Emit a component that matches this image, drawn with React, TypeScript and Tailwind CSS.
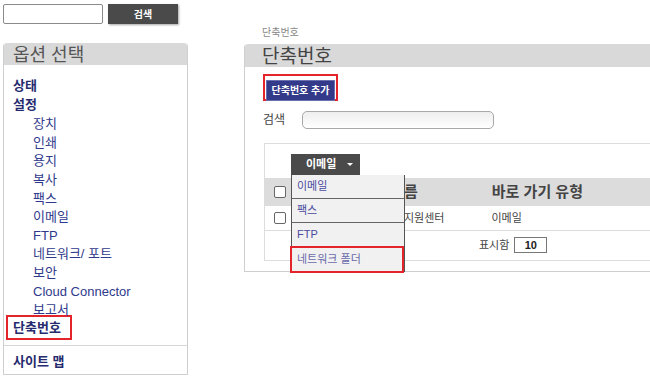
import React from 'react';

const subItems = ['장치', '인쇄', '용지', '복사', '팩스', '이메일', 'FTP', '네트워크/ 포트', '보안', 'Cloud Connector', '보고서'];
const menuItems = ['이메일', '팩스', 'FTP'];

export default function App() {
  return (
    <div className="w-[650px] h-[380px] overflow-hidden bg-white flex font-['Liberation_Sans','Noto_Sans_CJK_KR',sans-serif]">
      {/* Left column */}
      <div className="w-[244px] shrink-0 pl-[3px] pt-[4px]">
        <div className="flex gap-[5px] h-[20px]">
          <input className="w-[100px] h-[20px] border border-[#8a8a8a] rounded-[2px] bg-white" />
          <button className="w-[70px] h-[20px] bg-[#4a4a4a] text-white text-[10px] font-bold shadow-[1px_1px_2px_rgba(0,0,0,0.35)]">
            검색
          </button>
        </div>

        <div className="mt-[19px] w-[185px] h-[332px] border-x border-b border-[#cfcfcf] rounded-t-[4px] flex flex-col">
          <div className="h-[22px] bg-[#d9d9d9] rounded-t-[4px] pl-[9px] text-[18px] leading-[24px] text-[#555]">
            옵션 선택
          </div>
          <div className="pt-[12px] pl-[9px] text-[13px] leading-[18.6px] text-[#2f3a8c]">
            <div className="font-bold text-[#262a6e]">상태</div>
            <div className="font-bold text-[#262a6e] mb-[1px]">설정</div>
            {subItems.map((s) => (
              <div key={s} className="pl-[20px]">{s}</div>
            ))}
            <div className="-ml-[7px] mt-[-5px] w-[66px] h-[25px] border-2 border-[#e3242b] pl-[5px] font-bold text-[#262a6e] leading-[21px]">
              단축번호
            </div>
          </div>
          <div className="mt-[5px] border-t border-[#d6d6d6] pt-[6px] pl-[9px] text-[13px] font-bold text-[#262a6e]">
            사이트 맵
          </div>
        </div>
      </div>

      {/* Right column */}
      <div className="flex-1 pt-[26px]">
        <div className="pl-[18px] text-[10px] leading-[14px] text-[#888]">단축번호</div>
        <div className="mt-[4px] h-[228px] border-l border-b border-[#cfcfcf] rounded-tl-[4px]">
          <div className="h-[23px] bg-[#d9d9d9] rounded-tl-[4px] pl-[17px] text-[19px] leading-[25px] text-[#444]">
            단축번호
          </div>
          <div className="pl-[18px] pt-[7px]">
            <div className="w-[75px] h-[27px] border-2 border-[#e3242b] p-[1px]">
              <button className="w-full h-full bg-[#333a8a] border border-[#6a6fb0] text-white text-[10px] font-bold">
                단축번호 추가
              </button>
            </div>
            <div className="mt-[10px] flex items-center gap-[17px] h-[18px]">
              <span className="text-[12px] text-[#444]">검색</span>
              <input className="w-[192px] h-[18px] border border-[#a8a8a8] rounded-[5px] bg-gradient-to-b from-[#eeeeee] to-white" />
            </div>
          </div>

          <div className="relative ml-[19px] mt-[14px] h-[118px] border-t border-l border-b border-[#dcdcdc]">
            <div className="h-[34px]" />
            <div className="h-[28px] bg-[#dcdcdc] flex items-center">
              <span className="ml-[9px] w-[12px] h-[12px] border border-[#666] rounded-[2px] bg-white" />
              <span className="ml-[118px] text-[15px] font-bold text-[#444]">름</span>
              <span className="ml-[74px] text-[15px] font-bold text-[#444]">바로 가기 유형</span>
            </div>
            <div className="h-[25px] border-b border-[#dcdcdc] flex items-center text-[11px] text-[#444]">
              <span className="ml-[9px] w-[12px] h-[12px] border border-[#666] rounded-[2px] bg-white" />
              <span className="ml-[118px]">지원센터</span>
              <span className="ml-[47px]">이메일</span>
            </div>
            <div className="h-[28px] flex items-center text-[11px] text-[#444]">
              <span className="ml-[214px]">표시함</span>
              <span className="ml-[5px] w-[33px] h-[16px] border border-[#777] text-center text-[11px] font-bold leading-[14px] text-[#222]">
                10
              </span>
            </div>

            {/* Dropdown */}
            <div className="absolute left-[26px] top-[10px]">
              <button className="w-[69px] h-[21px] bg-[#4a4a4a] text-white text-[11px] font-bold flex items-center whitespace-nowrap pl-[15px]">
                <span>이메일</span>
                <span className="ml-[11px] shrink-0 w-0 h-0 border-x-[3px] border-x-transparent border-t-[3px] border-t-white" />
              </button>
              <div className="w-[114px] bg-[#f1f1f1] border-x border-b border-[#555]">
                {menuItems.map((m) => (
                  <div
                    key={m}
                    className="h-[24px] border-b border-[#666] pl-[5px] flex items-center text-[11px] text-[#4a4aa0]"
                  >
                    {m}
                  </div>
                ))}
                <div className="h-[24px] flex items-center">
                  <div className="-ml-[2px] w-[116px] h-[27px] border-2 border-[#e3242b] pl-[5px] flex items-center text-[11px] text-[#6a6aaa]">
                    네트워크 폴더
                  </div>
                </div>
              </div>
            </div>
          </div>
        </div>
      </div>
    </div>
  );
}
